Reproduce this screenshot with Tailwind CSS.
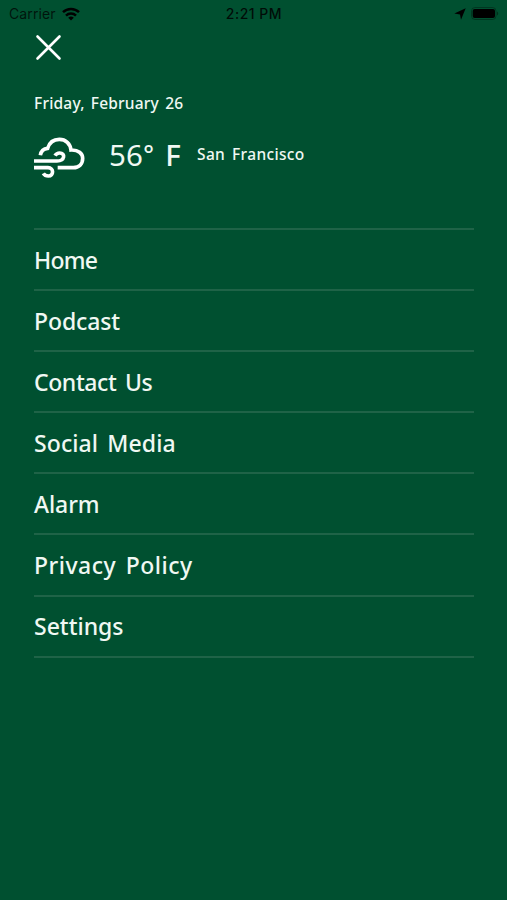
<!DOCTYPE html>
<html lang="en">
<head>
    <meta charset="UTF-8">
    <meta name="viewport" content="width=device-width, initial-scale=1.0">
    <title>Menu</title>
    <script src="https://cdn.jsdelivr.net/npm/@tailwindcss/browser@4"></script>
</head>
<body class="bg-[#005030] font-['Noto_Sans',sans-serif] text-[#f0f8f3]">

    <div class="flex flex-col h-screen overflow-hidden">
        <!-- Status bar -->
        <header class="grid grid-cols-3 items-center h-[27px] pl-[9px] pr-[8px] text-black font-['Inter',sans-serif] text-[14px]">
            <div class="flex items-center gap-[6px] text-black/75">
                <span class="tracking-[0.1px]">Carrier</span>
                <svg class="w-[18px] h-[14px] text-black" viewBox="0 0 18 14" fill="none" stroke="currentColor" stroke-width="2.5">
                    <path d="M1 5.2a11.4 11.4 0 0 1 16 0" />
                    <path d="M4 8.6a7.2 7.2 0 0 1 10 0" />
                    <path d="M9 13.5 6.2 10.8a4 4 0 0 1 5.6 0z" fill="currentColor" stroke="none" />
                </svg>
            </div>
            <span class="text-center font-medium text-[14px] tracking-[0.5px] text-black/85">2:21 PM</span>
            <div class="flex items-center justify-end gap-[5px]">
                <svg class="w-3 h-3" viewBox="0 0 12 12" fill="currentColor">
                    <path d="M11.7.3 7 11.8 6 6.4.3 5.5z" />
                </svg>
                <svg class="w-[28px] h-[13px]" viewBox="0 0 28 13">
                    <rect x=".5" y=".5" width="24.5" height="12" rx="3.5" fill="none" stroke="currentColor" stroke-opacity=".3" />
                    <rect x="1.7" y="2" width="22.3" height="9" rx="2" fill="currentColor" />
                    <path d="M26 4.5v4c1.6-.6 1.6-3.4 0-4z" fill="currentColor" fill-opacity=".4" />
                </svg>
            </div>
        </header>

        <main class="flex flex-col pl-[34px] pr-[33px]">
            <!-- Close button -->
            <button class="mt-[7px] ml-[1px] w-[27px] h-[27px]" aria-label="Close">
                <svg class="w-[27px] h-[27px]" viewBox="0 0 27 27" fill="none" stroke="white" stroke-width="2.6" stroke-linecap="round">
                    <path d="M2.5 2.5l22 22M24.5 2.5l-22 22" />
                </svg>
            </button>

            <!-- Date and weather -->
            <p class="mt-[32px] h-5 leading-5 text-[15.5px] font-medium tracking-[0.2px] [word-spacing:2px] whitespace-nowrap">Friday, February 26</p>
            <div class="flex items-center mt-[23px] h-[43px]">
                <svg class="w-[52px] h-[43px] shrink-0" viewBox="42 153 156 129" fill="none" stroke="white" stroke-width="11">
                    <path d="M61 211C63 198 72 191 83 190C88 173 101 163 118 163C137 163 151 176 153 195C175 194 188 205 188 220C188 237 177 248 160 248H113" />
                    <path d="M42 228H111C135 228 137 204 119 204C112 204 108 207 105 212" />
                    <path d="M42 248H84C102 248 102 273 85 273C77 273 73 270 70 265" />
                </svg>
                <div class="flex ml-[23px] -mt-[6px] w-[88px] text-[29.5px] leading-9 whitespace-pre">
                    <span class="tracking-[0.2px]">56</span><span class="-mt-[2px] text-[25px] font-medium">° </span><span class="ml-[5px] font-medium">F</span>
                </div>
                <span class="-mt-[7px] text-[15.5px] font-medium leading-5 tracking-[0.35px] [word-spacing:2.5px] whitespace-nowrap">San Francisco</span>
            </div>

            <!-- Menu -->
            <nav class="mt-[49px] flex flex-col border-t-2 border-[#1f6347] text-[23px] font-medium leading-8 whitespace-nowrap [word-spacing:3px]">
                <a class="flex items-center h-[61.1px] border-b-2 border-[#1f6347]"><span class="tracking-[-0.8px]">Home</span></a>
                <a class="flex items-center h-[61.1px] border-b-2 border-[#1f6347]"><span class="tracking-[-0.1px]">Podcast</span></a>
                <a class="flex items-center h-[61.1px] border-b-2 border-[#1f6347]"><span class="tracking-[-0.4px]">Contact Us</span></a>
                <a class="flex items-center h-[61.1px] border-b-2 border-[#1f6347]"><span class="tracking-[0.1px]">Social Media</span></a>
                <a class="flex items-center h-[61.1px] border-b-2 border-[#1f6347]"><span class="tracking-[-0.1px]">Alarm</span></a>
                <a class="flex items-center h-[61.1px] border-b-2 border-[#1f6347]"><span class="tracking-[0.5px]">Privacy Policy</span></a>
                <a class="flex items-center h-[61.1px] border-b-2 border-[#1f6347]"><span>Settings</span></a>
            </nav>
        </main>
    </div>

</body>
</html>
